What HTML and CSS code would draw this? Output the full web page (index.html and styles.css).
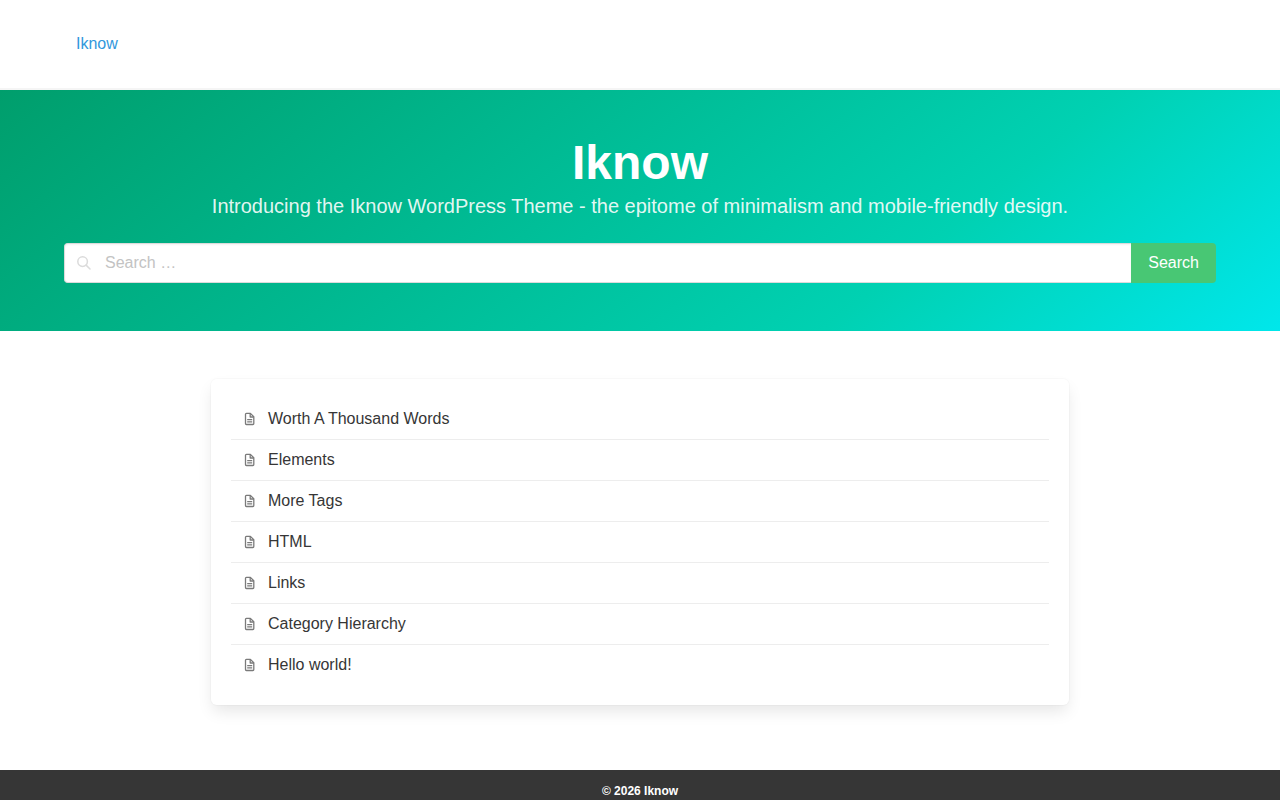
FILE: index.html
```html
<!DOCTYPE html>
<html lang="en">
<head>
    <meta charset="UTF-8">
    <title>Iknow</title>
    <meta name="viewport" content="width=device-width, initial-scale=1">
    <link rel="stylesheet" href="styles.css">
</head>
<body>
<svg class="sprite" aria-hidden="true">
    <symbol id="icon-doc" viewBox="0 0 14 14">
        <path d="M3.400 1.400h4l3.400 3.400v6.800a.9.9 0 0 1-.9.9H3.400a.9.9 0 0 1-.9-.9V2.300a.9.9 0 0 1 .9-.9z"/>
        <path d="M7.200 1.400v3.600h3.600M4.200 7.600h5M4.200 9.800h5"/>
    </symbol>
</svg>

<header class="navbar">
    <div class="container">
        <a class="navbar-item" href="#">Iknow</a>
    </div>
</header>

<section class="hero">
    <div class="container">
        <h1 class="title">Iknow</h1>
        <p class="subtitle">Introducing the Iknow WordPress Theme - the epitome of minimalism and mobile-friendly design.</p>
        <form class="search" role="search">
            <div class="search-control">
                <input class="search-input" type="search" placeholder="Search …" aria-label="Search">
                <svg class="search-icon" viewBox="0 0 14 14" aria-hidden="true">
                    <circle cx="5.600" cy="5.600" r="4.800"/>
                    <path d="M9.100 9.100l3.900 3.900"/>
                </svg>
            </div>
            <button class="search-button" type="submit">Search</button>
        </form>
    </div>
</section>

<main class="section">
    <div class="container">
        <ul class="box">
            <li><a class="panel-item" href="#"><svg class="icon"><use href="#icon-doc"/></svg>Worth A Thousand Words</a></li>
            <li><a class="panel-item" href="#"><svg class="icon"><use href="#icon-doc"/></svg>Elements</a></li>
            <li><a class="panel-item" href="#"><svg class="icon"><use href="#icon-doc"/></svg>More Tags</a></li>
            <li><a class="panel-item" href="#"><svg class="icon"><use href="#icon-doc"/></svg>HTML</a></li>
            <li><a class="panel-item" href="#"><svg class="icon"><use href="#icon-doc"/></svg>Links</a></li>
            <li><a class="panel-item" href="#"><svg class="icon"><use href="#icon-doc"/></svg>Category Hierarchy</a></li>
            <li><a class="panel-item" href="#"><svg class="icon"><use href="#icon-doc"/></svg>Hello world!</a></li>
        </ul>
    </div>
</main>

<footer class="footer">© 2026 Iknow</footer>
</body>
</html>
```

FILE: styles.css
```css
* {
    box-sizing: border-box;
}

body {
    margin: 0;
    font-family: "Liberation Sans", Arial, sans-serif;
    font-size: 16px;
    line-height: 24px;
    color: #363636;
    background-color: #fff;
}

h1, p, ul {
    margin: 0;
    padding: 0;
}

a {
    color: #3298dc;
    text-decoration: none;
}

.sprite {
    display: none;
}

.container {
    max-width: 1152px;
    margin: 0 auto;
}

.navbar {
    padding: 32px 0;
    border-bottom: 2px solid #f5f5f5;
}

.navbar-item {
    display: block;
    padding: 0 12px;
}

.hero {
    padding: 48px 0;
    color: #fff;
    text-align: center;
    background-image: linear-gradient(141deg, #009e6c 0%, #00d1b2 71%, #00e7eb 100%);
}

.title {
    font-size: 48px;
    font-weight: bold;
    line-height: 50px;
}

.subtitle {
    margin: 6px 0 24px;
    font-size: 20px;
    line-height: 25px;
    color: rgba(255, 255, 255, 0.9);
}

.search {
    display: flex;
}

.search-control {
    position: relative;
    flex: 1;
}

.search-input {
    display: block;
    width: 100%;
    height: 40px;
    padding: 0 12px 0 40px;
    border: 1px solid #dbdbdb;
    border-right: 0;
    border-radius: 4px 0 0 4px;
    font: inherit;
    color: #363636;
    background-color: #fff;
    box-shadow: inset 0 1px 2px rgba(10, 10, 10, 0.05);
    appearance: none;
}

.search-input::placeholder {
    color: #c3c3c3;
}

.search-icon {
    position: absolute;
    top: 13px;
    left: 13px;
    width: 14px;
    height: 14px;
    fill: none;
    stroke: #dbdbdb;
    stroke-width: 1.5;
    stroke-linecap: round;
}

.search-button {
    height: 40px;
    padding: 0 17px;
    border: 0;
    border-radius: 0 4px 4px 0;
    font: inherit;
    color: #fff;
    background-color: #48c774;
    cursor: pointer;
}

.section {
    padding: 48px 0 65px;
}

.box {
    width: 858px;
    max-width: 100%;
    margin: 0 auto;
    padding: 20px;
    list-style: none;
    border-radius: 6px;
    box-shadow: 0 8px 16px -2px rgba(10, 10, 10, 0.1), 0 0 0 1px rgba(10, 10, 10, 0.02);
}

.box li + li {
    border-top: 1px solid #ededed;
}

.panel-item {
    display: flex;
    align-items: center;
    gap: 11px;
    padding: 8px 12px;
    color: #363636;
}

.icon {
    width: 14px;
    height: 14px;
    fill: none;
    stroke: #7a7a7a;
    stroke-width: 1.3;
    stroke-linejoin: round;
}

.footer {
    padding: 12px 24px;
    font-size: 12px;
    font-weight: bold;
    line-height: 18px;
    text-align: center;
    color: #fff;
    background-color: #363636;
}
```
